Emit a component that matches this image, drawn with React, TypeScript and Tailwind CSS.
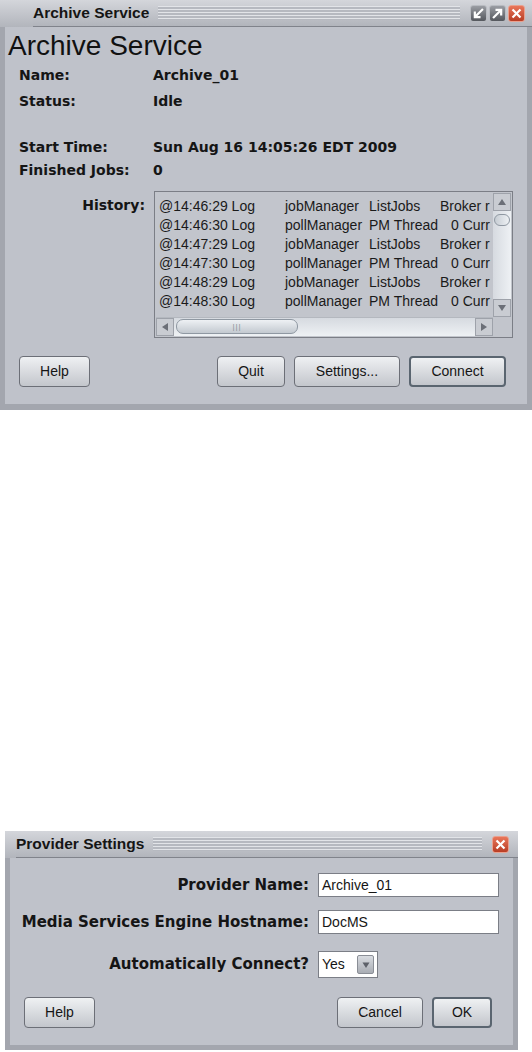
import clsx from "clsx";

const rows = [
  ["@14:46:29 Log", "jobManager", "ListJobs", "Broker r"],
  ["@14:46:30 Log", "pollManager", "PM Thread", "0 Curr"],
  ["@14:47:29 Log", "jobManager", "ListJobs", "Broker r"],
  ["@14:47:30 Log", "pollManager", "PM Thread", "0 Curr"],
  ["@14:48:29 Log", "jobManager", "ListJobs", "Broker r"],
  ["@14:48:30 Log", "pollManager", "PM Thread", "0 Curr"],
];

function CtlBtn({ kind }: { kind: "min" | "max" | "close" }) {
  return (
    <div
      className={clsx(
        "flex h-[17px] w-[17px] items-center justify-center rounded-[3px] border",
        kind === "close"
          ? "border-[#e9a08e] bg-linear-to-b from-[#e9765a] to-[#b83d24]"
          : "border-[#b8bbc1] bg-linear-to-b from-[#9a9da3] to-[#55585e]"
      )}
    >
      <svg width="11" height="11" viewBox="0 0 12 12" fill="none" stroke="white" strokeWidth="2.4" strokeLinecap="square">
        {kind === "min" && (
          <>
            <path d="M10 2 L3.5 8.5" />
            <path d="M2 5 V10 H7" />
          </>
        )}
        {kind === "max" && (
          <>
            <path d="M2 10 L8.5 3.5" />
            <path d="M5 2 H10 V7" />
          </>
        )}
        {kind === "close" && (
          <>
            <path d="M2.5 2.5 L9.5 9.5" />
            <path d="M9.5 2.5 L2.5 9.5" />
          </>
        )}
      </svg>
    </div>
  );
}

function TitleBar({ title, children, stripeEnd }: { title: string; children: React.ReactNode; stripeEnd: string }) {
  return (
    <div className="flex h-[27px] items-center border-b border-[#80838b] bg-linear-to-b from-[#d4d6db] to-[#b2b5bc]">
      <span className="text-[15.5px] font-bold text-[#151515]">{title}</span>
      <div
        className={clsx(
          "ml-[9px] h-[14px] flex-1 bg-[repeating-linear-gradient(to_bottom,#e2e4e8_0px,#e2e4e8_1px,#b6b9c0_1px,#b6b9c0_3px)]",
          stripeEnd
        )}
      />
      {children}
    </div>
  );
}

function Btn({ label, className, primary }: { label: string; className: string; primary?: boolean }) {
  return (
    <div
      className={clsx(
        "flex h-[31px] items-center justify-center rounded-[4px] bg-linear-to-b from-[#eff1f3] to-[#c3c6cc] text-[14px] text-[#151515]",
        primary ? "border-2 border-[#5a6570]" : "border border-[#6c6f77]",
        className
      )}
    >
      {label}
    </div>
  );
}

function Arrow({ dir }: { dir: "up" | "down" | "left" | "right" }) {
  const d = {
    up: "M2 9 L6 3 L10 9 Z",
    down: "M2 3 L6 9 L10 3 Z",
    left: "M9 2 L3 6 L9 10 Z",
    right: "M3 2 L9 6 L3 10 Z",
  }[dir];
  return (
    <div className="flex h-[18px] w-[18px] items-center justify-center border border-[#9ea2aa] bg-[#c9ccd2]">
      <svg width="12" height="12" viewBox="0 0 12 12">
        <path d={d} fill="#6b6f77" />
      </svg>
    </div>
  );
}

function History() {
  return (
    <div className="grid h-[147px] w-[359px] grid-cols-[1fr_18px] grid-rows-[1fr_19px] border border-[#7b7e86] bg-[#c2c5cc] p-[1px]">
      <div className="overflow-hidden pt-[4px] pl-[3px] text-[14px] text-[#1a1a1a]">
        {rows.map((r, i) => (
          <div key={i} className="flex h-[19px] items-center whitespace-nowrap">
            <span className="w-[126px] shrink-0">{r[0]}</span>
            <span className="w-[84px] shrink-0">{r[1]}</span>
            <span className="w-[71px] shrink-0">{r[2]}</span>
            <span className={clsx("shrink-0", r[3] === "0 Curr" && "pl-[11px]")}>{r[3]}</span>
          </div>
        ))}
      </div>
      <div className="flex flex-col bg-linear-to-r from-[#d6dae0] to-[#eef1f4]">
        <Arrow dir="up" />
        <div className="flex-1 px-[1px] pt-[3px]">
          <div className="h-[12px] rounded-[6px] border border-[#8f98a2] bg-linear-to-r from-[#c7cdd4] to-[#eef1f4]" />
        </div>
        <Arrow dir="down" />
      </div>
      <div className="flex border-t border-[#b4b8bf] bg-linear-to-b from-[#d6dae0] to-[#eef1f4]">
        <Arrow dir="left" />
        <div className="flex-1 px-[2px] py-[1px]">
          <div className="flex h-[15px] w-[122px] items-center justify-center rounded-[7px] border border-[#8f98a2] bg-linear-to-b from-[#eef1f4] to-[#c3c9d0]">
            <span className="text-[8px] leading-none tracking-[1px] text-[#8a9099]">|||</span>
          </div>
        </div>
        <Arrow dir="right" />
      </div>
      <div className="bg-[#c2c5cc]" />
    </div>
  );
}

function Row({ label, value, className }: { label: string; value: string; className?: string }) {
  return (
    <div className={clsx("flex h-[23px] items-center", className)}>
      <span className="w-[134px] shrink-0">{label}</span>
      <span>{value}</span>
    </div>
  );
}

function ArchiveWindow() {
  return (
    <div className="flex h-[410px] w-[532px] flex-col">
      <div className="pl-[33px] bg-linear-to-b from-[#d4d6db] to-[#b2b5bc]">
        <TitleBar title="Archive Service" stripeEnd="mr-[10px]">
          <div className="flex gap-[2px] pr-[7px]">
            <CtlBtn kind="min" />
            <CtlBtn kind="max" />
            <CtlBtn kind="close" />
          </div>
        </TitleBar>
      </div>
      <div className="flex flex-1 flex-col border-x-[5px] border-b-[6px] border-[#a3a6ae] bg-[#bfc2ca]">
        <div className="pl-[3px] pt-[3px] text-[28px] leading-[31px] text-[#111]">Archive Service</div>
        <div className="flex flex-col pl-[14px] pt-[3px] font-['DejaVu_Sans',sans-serif] text-[14px] font-bold text-[#151515]">
          <Row label="Name:" value="Archive_01" />
          <Row label="Status:" value="Idle" className="mt-[3px]" />
          <Row label="Start Time:" value="Sun Aug 16 14:05:26 EDT 2009" className="mt-[23px]" />
          <Row label="Finished Jobs:" value="0" />
          <div className="mt-[9px] flex">
            <span className="w-[126px] shrink-0 pt-[4px] text-right">History:</span>
            <div className="ml-[9px] font-['Liberation_Sans',Arial,sans-serif] font-normal">
              <History />
            </div>
          </div>
        </div>
        <div className="mt-[18px] flex pl-[14px] pr-[21px]">
          <Btn label="Help" className="w-[71px]" />
          <div className="flex-1" />
          <Btn label="Quit" className="w-[68px]" />
          <Btn label="Settings..." className="ml-[9px] w-[106px]" />
          <Btn label="Connect" className="ml-[9px] w-[97px]" primary />
        </div>
      </div>
    </div>
  );
}

function Field({ label, children }: { label: string; children: React.ReactNode }) {
  return (
    <div className="flex items-center">
      <span className="w-[303px] shrink-0 pr-[4px] text-right font-['DejaVu_Sans',sans-serif] text-[15px] font-bold text-[#151515]">
        {label}
      </span>
      <div className="ml-[5px]">{children}</div>
    </div>
  );
}

function SettingsWindow() {
  return (
    <div className="ml-[5px] mt-[421px] flex h-[219px] w-[513px] flex-col">
      <div className="pl-[11px] bg-linear-to-b from-[#d4d6db] to-[#b2b5bc]">
        <TitleBar title="Provider Settings" stripeEnd="mr-[10px]">
          <div className="pr-[9px]">
            <CtlBtn kind="close" />
          </div>
        </TitleBar>
      </div>
      <div className="flex flex-1 flex-col border-x-[5px] border-b-[5px] border-[#a3a6ae] bg-[#bfc2ca] pt-[15px] text-[14px]">
        <Field label="Provider Name:">
          <div className="flex h-[24px] w-[181px] items-center border border-[#7b7e86] bg-white pl-[3px]">Archive_01</div>
        </Field>
        <div className="mt-[13px]">
          <Field label="Media Services Engine Hostname:">
            <div className="flex h-[24px] w-[181px] items-center border border-[#7b7e86] bg-white pl-[3px]">DocMS</div>
          </Field>
        </div>
        <div className="mt-[17px]">
          <Field label="Automatically Connect?">
            <div className="flex h-[27px] w-[60px] items-center justify-between border border-[#7b7e86] bg-white pl-[3px] pr-[3px]">
              <span>Yes</span>
              <div className="flex h-[19px] w-[17px] items-center justify-center rounded-[2px] border border-[#8a8e96] bg-linear-to-b from-[#d9dce1] to-[#a9adb4]">
                <svg width="10" height="10" viewBox="0 0 10 10">
                  <path d="M1.5 2.5 L5 8 L8.5 2.5 Z" fill="#5d6169" />
                </svg>
              </div>
            </div>
          </Field>
        </div>
        <div className="mt-[19px] flex pl-[14px] pr-[21px]">
          <Btn label="Help" className="w-[71px]" />
          <div className="flex-1" />
          <Btn label="Cancel" className="w-[86px]" />
          <Btn label="OK" className="ml-[9px] w-[60px]" primary />
        </div>
      </div>
    </div>
  );
}

export default function App() {
  return (
    <div className="min-h-[1052px] w-[532px] bg-white font-['Liberation_Sans',Arial,sans-serif] text-[#151515]">
      <ArchiveWindow />
      <SettingsWindow />
    </div>
  );
}
